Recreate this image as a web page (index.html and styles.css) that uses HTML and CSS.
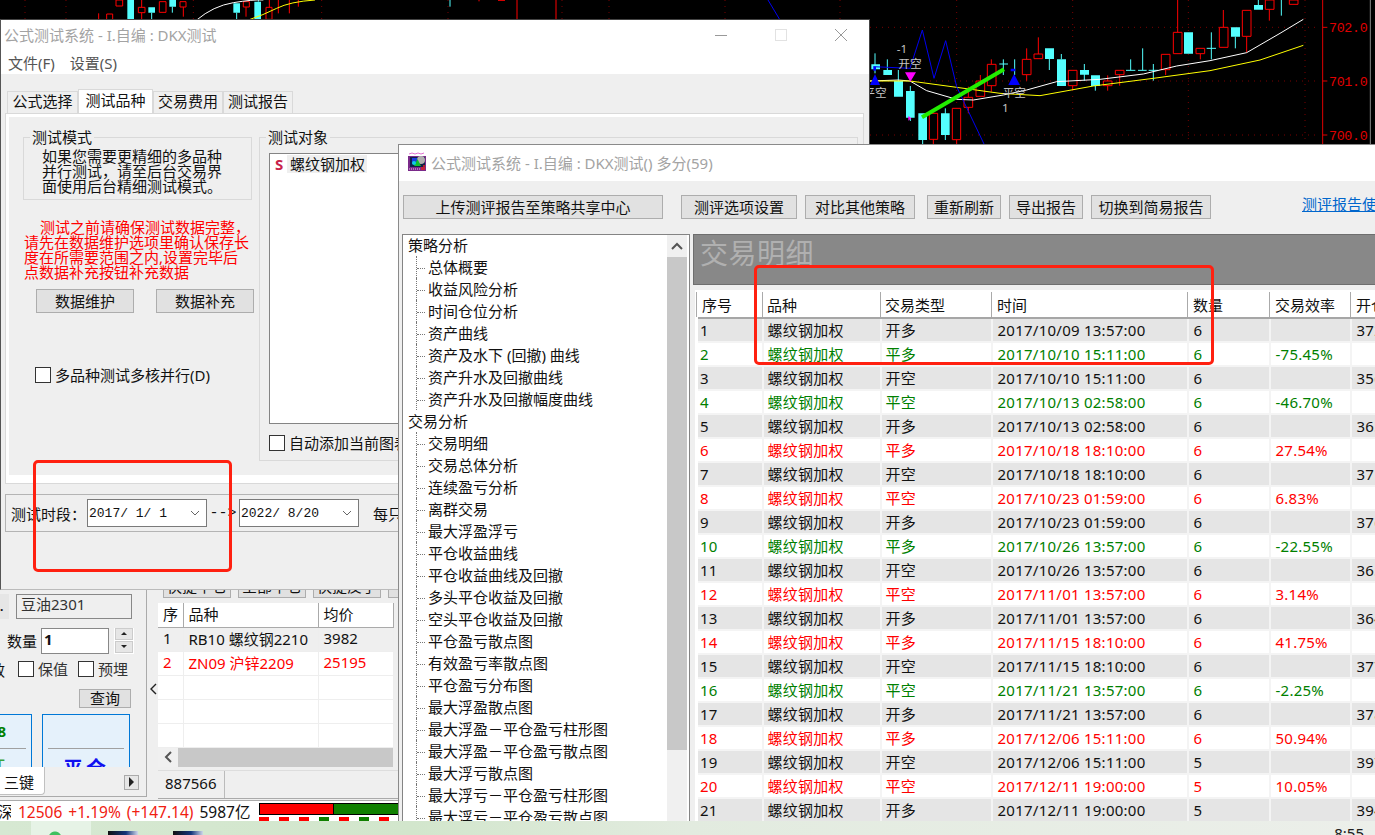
FILE: index.html
```html
<!DOCTYPE html>
<html lang="zh-CN">
<head>
    <meta charset="UTF-8">
    <meta name="viewport" content="width=device-width, initial-scale=1.0">
    <title>公式测试系统</title>
    <link rel="stylesheet" href="styles.css">
</head>
<body>
<div class="desktop">

    <!-- 背景K线图 -->
    <svg class="chart chart-top" viewBox="0 0 2610 60" aria-hidden="true">
        <path class="grid" d="M75 0V60M198 0V60M580 0V60M965 0V60M1344 0V60M1686 0V60M1827 0V60M2175 0V60M2520 0V60"/>
        <path class="wick-r" d="M296 40V60M425 0V58M550 20V50M738 20V50M808 0V58M835 0V40M868 0V40M895 0V20M1551 0V60M1668 0V60M1494 1H1515M1437 0V4"/>
        <path class="wick-c" d="M455 38V58M517 20V38M710 38V58M775 0V5M1350 0V20"/>
        <path class="cn-r" d="M348 0H368V18H348ZM320 42H338V60H320ZM415 22H435V38H415ZM478 5H498V37H478ZM540 5H558V21H540ZM730 5H748V21H730ZM798 22H816V58H798Z"/>
        <path class="cn-c" d="M382 0H402V58H382ZM445 22H465V38H445ZM508 0H528V20H508ZM700 10H720V38H700ZM763 5H783V60H763Z"/>
        <path class="ma-w" d="M590 60Q640 18 700 8T790 0"/>
        <path class="ma-y" d="M745 60Q790 45 830 25T945 0"/>
        <path class="wick-b" d="M2304 0L2340 60"/>
    </svg>

    <svg class="chart chart-side" viewBox="0 0 1545 432" aria-hidden="true">
        <path class="grid" d="M30 82H1380M30 243H1380M30 405H1380M290 0V432M638 0V432M985 0V432M1335 0V432"/>
        <path class="wick-c" d="M45 160V220M82 178V210M115 210V243M151 258V363M188 420V432M256 325V420M568 177V210M604 162V178M673 192V242M706 258V272M1126 110V145M1195 0V15M1264 0V47M430 178V225M418 192H444M464 178V225M812 178V211M798 211H826M848 145V211M834 211H860M880 192V242M866 211H894M1054 97V178M1040 145H1068"/>
        <path class="wick-r" d="M220 418V432M290 419V432M325 260V292M325 322V340M361 225V243M394 178V193M394 257V275M500 145V178M500 224V242M535 112V162M638 257V270M743 226V243M743 257V272M779 224V257M917 209V225M953 0V97M1021 161V178M1090 30V82M1160 109V158M1228 28V62"/>
        <path class="cn-c" d="M34 193H60V208H34ZM70 210H96V225H70ZM102 243H129V290H102ZM138 273H164V353H138ZM175 340H201V420H175ZM243 340H269V405H243ZM555 145H582V177H555ZM591 178H618V258H591ZM660 210H687V224H660ZM693 226H720V258H693ZM972 97H999V161H972ZM1113 82H1140V110H1113ZM1182 15H1209V29H1182Z"/>
        <path class="cn-r" d="M208 340H233V418H208ZM277 325H302V419H277ZM312 292H338V322H312ZM348 243H374V289H348ZM382 193H408V257H382ZM487 178H513V224H487ZM522 162H548V176H522ZM625 211H651V257H625ZM730 243H756V257H730ZM766 211H792V224H766ZM904 163H930V209H904ZM940 97H966V161H940ZM1008 145H1034V161H1008ZM1078 82H1104V142H1078ZM1147 31H1173V109H1147ZM1216 0H1242V28H1216ZM1288 0H1314V13H1288Z"/>
        <polyline class="ma-w" points="30,243 115,240 150,243 200,272 290,298 340,300 430,285 500,270 590,245 720,238 850,222 950,198 1050,182 1160,158 1260,100 1330,58"/>
        <polyline class="ma-y" points="30,243 150,243 290,262 420,280 540,287 700,258 880,235 1050,212 1200,180 1330,136"/>
        <polyline class="wick-b" points="40,200 150,205 187,90 222,235 257,122 290,260 372,432"/>
        <path class="mark-line" d="M186 352L432 208"/>
        <path class="mark-b" d="M45 222L60 255H30ZM462 222L480 255H445ZM40 200H48V212H40ZM452 206H466V214H452Z"/>
        <path class="mark-m" d="M135 217H168L151 245ZM145 348L154 355L145 362Z"/>
        <text class="chart-label" x="110" y="158">-1</text>
        <text class="chart-label" x="115" y="203">开空</text>
        <text class="chart-label" x="10" y="290">平空</text>
        <text class="chart-label" x="428" y="290">平空</text>
        <text class="chart-label" x="426" y="335">1</text>
        <path class="axis" d="M1388 0V432M1388 82H1402M1388 243H1402M1388 405H1402"/>
        <text class="axis-label" x="1407" y="97">702.0</text>
        <text class="axis-label" x="1407" y="259">701.0</text>
        <text class="axis-label" x="1407" y="421">700.0</text>
        <path class="edge" d="M1531 0V432"/>
    </svg>

    <!-- 后面的交易面板 -->
    <div class="trade-app">
        <div class="trade-main">
            <div class="order-panel">
                <div class="order-name-row">
                    <button class="stub-btn">.</button>
                    <div class="name-box">豆油2301</div>
                </div>
                <div class="qty-row">
                    <span>数量</span>
                    <div class="qty-input">1</div>
                    <div class="spinner">
                        <div class="spin-btn"><i class="tri-up"></i></div>
                        <div class="spin-btn"><i class="tri-down"></i></div>
                    </div>
                </div>
                <div class="option-row">
                    <span class="cut-label">效</span>
                    <span class="check"></span><span class="option-text">保值</span>
                    <span class="check check-next"></span><span class="option-text">预埋</span>
                </div>
                <button class="win-btn query-btn">查询</button>
                <div class="card-row">
                    <div class="trade-card card-left">
                        <div class="card-top card-green">8</div>
                        <div class="card-action card-green">开</div>
                    </div>
                    <div class="trade-card card-right">
                        <div class="card-top"></div>
                        <div class="card-action">平仓</div>
                    </div>
                </div>
                <div class="key-tabs">
                    <div class="key-tab">三键</div>
                    <div class="key-next"><i class="tri-right"></i></div>
                </div>
            </div>
            <div class="collapse-strip">
                <svg width="8" height="12" viewBox="0 0 8 12"><path d="M7 1L2 6L7 11" fill="none" stroke="#222" stroke-width="1.4"/></svg>
            </div>
            <div class="position-panel">
                <div class="quick-btns">
                    <button class="win-btn quick-btn">快捷平仓</button>
                    <button class="win-btn quick-btn">全部平仓</button>
                    <button class="win-btn quick-btn">快捷反手</button>
                    <button class="win-btn quick-btn">撤单</button>
                </div>
                <table class="pos-table">
                    <colgroup><col class="pc-1"><col class="pc-2"><col class="pc-3"></colgroup>
                    <thead><tr><th>序</th><th>品种</th><th>均价</th></tr></thead>
                    <tbody>
                        <tr class="pos-odd"><td>1</td><td>RB10 螺纹钢2210</td><td>3982</td></tr>
                        <tr class="up"><td>2</td><td>ZN09 沪锌2209</td><td>25195</td></tr>
                        <tr><td></td><td></td><td></td></tr>
                        <tr><td></td><td></td><td></td></tr>
                        <tr><td></td><td></td><td></td></tr>
                    </tbody>
                </table>
                <div class="h-scroll">
                    <div class="h-scroll-arrow">
                        <svg width="8" height="12" viewBox="0 0 8 12"><path d="M7 1L2 6L7 11" fill="none" stroke="#555" stroke-width="2"/></svg>
                    </div>
                    <div class="h-scroll-thumb"></div>
                </div>
                <div class="account-row"><div class="account-cell">887566</div></div>
            </div>
        </div>
        <div class="status-bar">
            <span class="st-name">深</span>
            <span class="st-up">12506</span>
            <span class="st-up">+1.19%</span>
            <span class="st-up">(+147.14)</span>
            <span>5987亿</span>
            <div class="st-meter">
                <div class="st-bar"><div class="st-bar-red"></div><div class="st-bar-green"></div></div>
                <div class="st-ticks"><i></i><i></i><i></i><i class="tick-green"></i><i></i><i class="tick-green"></i><i></i></div>
            </div>
        </div>
    </div>

    <!-- 公式测试系统 窗口1 -->
    <div class="window win-setup">
        <div class="titlebar">
            <span class="title-text">公式测试系统 - I.自编 : DKX测试</span>
            <div class="win-controls">
                <svg width="14" height="14" viewBox="0 0 14 14"><path d="M1 7.5H13" stroke="#999"/></svg>
                <svg width="14" height="14" viewBox="0 0 14 14"><rect x="1.5" y="1.5" width="11" height="11" fill="none" stroke="#e2e2e2"/></svg>
                <svg width="14" height="14" viewBox="0 0 14 14"><path d="M1 1L13 13M13 1L1 13" stroke="#999"/></svg>
            </div>
        </div>
        <div class="menubar"><span>文件(F)</span><span>设置(S)</span></div>
        <div class="setup-body">
            <div class="tabs">
                <div class="tab">公式选择</div>
                <div class="tab tab-active">测试品种</div>
                <div class="tab">交易费用</div>
                <div class="tab">测试报告</div>
            </div>
            <div class="tab-panel">
                <div class="tab-inner">
                    <div class="left-col">
                        <div class="group mode-group">
                            <div class="group-title">测试模式</div>
                            <div class="mode-text">如果您需要更精细的多品种<br>并行测试，请至后台交易界<br>面使用后台精细测试模式。</div>
                        </div>
                        <div class="warn-text"><span class="warn-first">测试之前请确保测试数据完整，</span><br>请先在数据维护选项里确认保存长<br>度在所需要范围之内,设置完毕后<br>点数据补充按钮补充数据</div>
                        <div class="data-btns">
                            <button class="win-btn data-btn">数据维护</button>
                            <button class="win-btn data-btn">数据补充</button>
                        </div>
                        <label class="check-row multi-core"><span class="check"></span>多品种测试多核并行(D)</label>
                    </div>
                    <div class="group target-group">
                        <div class="group-title">测试对象</div>
                        <div class="target-list">
                            <div class="target-item"><span class="target-s">S</span><span class="target-name">螺纹钢加权</span></div>
                        </div>
                        <label class="check-row auto-add"><span class="check"></span>自动添加当前图表品种</label>
                    </div>
                </div>
            </div>
            <div class="period-group">
                <span>测试时段：</span>
                <div class="date-box">2017/ 1/ 1<svg width="10" height="6" viewBox="0 0 10 6"><path d="M1 1L5 5L9 1" fill="none" stroke="#666"/></svg></div>
                <span class="date-sep">--&gt;</span>
                <div class="date-box">2022/ 8/20<svg width="10" height="6" viewBox="0 0 10 6"><path d="M1 1L5 5L9 1" fill="none" stroke="#666"/></svg></div>
                <span class="per-each">每只品种</span>
            </div>
        </div>
    </div>

    <!-- 公式测试系统 窗口2 -->
    <div class="window win-report">
        <div class="titlebar report-title">
            <svg class="app-icon" width="20" height="20" viewBox="0 0 20 20">
                <rect x="1" y="4" width="18" height="15" fill="#7a2a8a"/>
                <rect x="3" y="5" width="15" height="10" fill="#10204a"/>
                <path d="M2 2L5 1L8 2L11 1L14 2L17 1" fill="none" stroke="#e070d0"/>
                <path d="M2 17H14" stroke="#f0c0f0" stroke-dasharray="1 1"/>
                <rect x="5" y="6" width="5" height="6" fill="#1a3ee0"/>
                <circle cx="14" cy="8" r="4" fill="#b0b0b0"/>
                <path d="M7 14L10.500 7L14 14Z" fill="#10c030"/>
                <circle cx="7" cy="11" r="2" fill="#10d0e0"/>
                <path d="M15 18V15M17 18V13" stroke="#e02020" stroke-width="1.500"/>
            </svg>
            <span class="title-text">公式测试系统 - I.自编 : DKX测试() 多分(59)</span>
        </div>
        <div class="report-toolbar">
            <button class="win-btn tb-upload">上传测评报告至策略共享中心</button>
            <button class="win-btn tb-option">测评选项设置</button>
            <button class="win-btn tb-compare">对比其他策略</button>
            <button class="win-btn tb-refresh">重新刷新</button>
            <button class="win-btn tb-export">导出报告</button>
            <button class="win-btn tb-switch">切换到简易报告</button>
            <a class="help-link">测评报告使用说明</a>
        </div>
        <div class="report-main">
            <div class="tree-box">
                <div class="tree-list">
                    <div class="tree-root">策略分析</div>
                    <div class="tree-leaf">总体概要</div>
                    <div class="tree-leaf">收益风险分析</div>
                    <div class="tree-leaf">时间仓位分析</div>
                    <div class="tree-leaf">资产曲线</div>
                    <div class="tree-leaf">资产及水下 (回撤) 曲线</div>
                    <div class="tree-leaf">资产升水及回撤曲线</div>
                    <div class="tree-leaf">资产升水及回撤幅度曲线</div>
                    <div class="tree-root">交易分析</div>
                    <div class="tree-leaf">交易明细</div>
                    <div class="tree-leaf">交易总体分析</div>
                    <div class="tree-leaf">连续盈亏分析</div>
                    <div class="tree-leaf">离群交易</div>
                    <div class="tree-leaf">最大浮盈浮亏</div>
                    <div class="tree-leaf">平仓收益曲线</div>
                    <div class="tree-leaf">平仓收益曲线及回撤</div>
                    <div class="tree-leaf">多头平仓收益及回撤</div>
                    <div class="tree-leaf">空头平仓收益及回撤</div>
                    <div class="tree-leaf">平仓盈亏散点图</div>
                    <div class="tree-leaf">有效盈亏率散点图</div>
                    <div class="tree-leaf">平仓盈亏分布图</div>
                    <div class="tree-leaf">最大浮盈散点图</div>
                    <div class="tree-leaf">最大浮盈－平仓盈亏柱形图</div>
                    <div class="tree-leaf">最大浮盈－平仓盈亏散点图</div>
                    <div class="tree-leaf">最大浮亏散点图</div>
                    <div class="tree-leaf">最大浮亏－平仓盈亏柱形图</div>
                    <div class="tree-leaf">最大浮亏－平仓盈亏散点图</div>
                </div>
                <div class="v-scroll">
                    <div class="v-scroll-arrow">
                        <svg width="12" height="8" viewBox="0 0 12 8"><path d="M1 7L6 2L11 7" fill="none" stroke="#555" stroke-width="2"/></svg>
                    </div>
                    <div class="v-scroll-thumb"></div>
                </div>
            </div>
            <div class="detail-area">
                <div class="detail-head">交易明细</div>
                <table class="trade-table">
                    <colgroup>
                        <col class="tc-no"><col class="tc-name"><col class="tc-type"><col class="tc-time"><col class="tc-qty"><col class="tc-eff"><col class="tc-open">
                    </colgroup>
                    <thead>
                        <tr><th>序号</th><th>品种</th><th>交易类型</th><th>时间</th><th>数量</th><th>交易效率</th><th>开仓价</th></tr>
                    </thead>
                    <tbody>
                        <tr><td>1</td><td>螺纹钢加权</td><td>开多</td><td>2017/10/09 13:57:00</td><td>6</td><td></td><td>3725</td></tr>
                        <tr class="loss"><td>2</td><td>螺纹钢加权</td><td>平多</td><td>2017/10/10 15:11:00</td><td>6</td><td>-75.45%</td><td></td></tr>
                        <tr><td>3</td><td>螺纹钢加权</td><td>开空</td><td>2017/10/10 15:11:00</td><td>6</td><td></td><td>3560</td></tr>
                        <tr class="loss"><td>4</td><td>螺纹钢加权</td><td>平空</td><td>2017/10/13 02:58:00</td><td>6</td><td>-46.70%</td><td></td></tr>
                        <tr><td>5</td><td>螺纹钢加权</td><td>开多</td><td>2017/10/13 02:58:00</td><td>6</td><td></td><td>3650</td></tr>
                        <tr class="gain"><td>6</td><td>螺纹钢加权</td><td>平多</td><td>2017/10/18 18:10:00</td><td>6</td><td>27.54%</td><td></td></tr>
                        <tr><td>7</td><td>螺纹钢加权</td><td>开空</td><td>2017/10/18 18:10:00</td><td>6</td><td></td><td>3710</td></tr>
                        <tr class="gain"><td>8</td><td>螺纹钢加权</td><td>平空</td><td>2017/10/23 01:59:00</td><td>6</td><td>6.83%</td><td></td></tr>
                        <tr><td>9</td><td>螺纹钢加权</td><td>开多</td><td>2017/10/23 01:59:00</td><td>6</td><td></td><td>3760</td></tr>
                        <tr class="loss"><td>10</td><td>螺纹钢加权</td><td>平多</td><td>2017/10/26 13:57:00</td><td>6</td><td>-22.55%</td><td></td></tr>
                        <tr><td>11</td><td>螺纹钢加权</td><td>开空</td><td>2017/10/26 13:57:00</td><td>6</td><td></td><td>3650</td></tr>
                        <tr class="gain"><td>12</td><td>螺纹钢加权</td><td>平空</td><td>2017/11/01 13:57:00</td><td>6</td><td>3.14%</td><td></td></tr>
                        <tr><td>13</td><td>螺纹钢加权</td><td>开多</td><td>2017/11/01 13:57:00</td><td>6</td><td></td><td>3640</td></tr>
                        <tr class="gain"><td>14</td><td>螺纹钢加权</td><td>平多</td><td>2017/11/15 18:10:00</td><td>6</td><td>41.75%</td><td></td></tr>
                        <tr><td>15</td><td>螺纹钢加权</td><td>开空</td><td>2017/11/15 18:10:00</td><td>6</td><td></td><td>3770</td></tr>
                        <tr class="loss"><td>16</td><td>螺纹钢加权</td><td>平空</td><td>2017/11/21 13:57:00</td><td>6</td><td>-2.25%</td><td></td></tr>
                        <tr><td>17</td><td>螺纹钢加权</td><td>开多</td><td>2017/11/21 13:57:00</td><td>6</td><td></td><td>3780</td></tr>
                        <tr class="gain"><td>18</td><td>螺纹钢加权</td><td>平多</td><td>2017/12/06 15:11:00</td><td>6</td><td>50.94%</td><td></td></tr>
                        <tr><td>19</td><td>螺纹钢加权</td><td>开空</td><td>2017/12/06 15:11:00</td><td>5</td><td></td><td>3970</td></tr>
                        <tr class="gain"><td>20</td><td>螺纹钢加权</td><td>平空</td><td>2017/12/11 19:00:00</td><td>5</td><td>10.05%</td><td></td></tr>
                        <tr><td>21</td><td>螺纹钢加权</td><td>开多</td><td>2017/12/11 19:00:00</td><td>5</td><td></td><td>3940</td></tr>
                    </tbody>
                </table>
            </div>
        </div>
    </div>

    <!-- 截图上的红框 -->
    <div class="red-box red-box-date"></div>
    <div class="red-box red-box-table"></div>

    <!-- 任务栏 -->
    <div class="taskbar">
        <div class="task-slot task-slot-a"></div>
        <div class="task-icon task-icon-a"></div>
        <div class="task-icon task-icon-b"></div>
        <span class="task-clock">8:55</span>
    </div>
</div>
</body>
</html>
```

FILE: styles.css
```css
* {
    box-sizing: border-box;
}
html, body {
    margin: 0;
    height: 100%;
    overflow: hidden;
}
body {
    font-family: "Noto Sans", "Noto Sans CJK SC", sans-serif;
    font-size: 15px;
    color: #111;
    background: #000;
}
button {
    font: inherit;
    color: inherit;
    padding: 0;
}
.desktop {
    position: relative;
    width: 1375px;
    height: 835px;
    overflow: hidden;
    background: #000;
}

/* K线图 */
.chart {
    position: absolute;
    display: block;
}
.chart-top {
    left: 0;
    top: 0;
    width: 870px;
    height: 20px;
}
.chart-side {
    left: 860px;
    top: 0;
    width: 515px;
    height: 144px;
}
.grid {
    fill: none;
    stroke: #7a0000;
    stroke-width: 3;
    stroke-dasharray: 3 15;
}
.wick-r { fill: none; stroke: #f00; stroke-width: 3; }
.wick-c { fill: none; stroke: #54ffff; stroke-width: 3; }
.wick-b { fill: none; stroke: #0000f0; stroke-width: 3; }
.cn-r { fill: #000; stroke: #f00; stroke-width: 3; }
.cn-c { fill: #54ffff; }
.ma-w { fill: none; stroke: #fff; stroke-width: 3; }
.ma-y { fill: none; stroke: #ff0; stroke-width: 3; }
.mark-line { fill: none; stroke: #22ee00; stroke-width: 12; }
.mark-b { fill: #0000ff; }
.mark-m { fill: #ff00ff; }
.chart-label {
    fill: #c4c4c4;
    font-size: 35px;
}
.axis { fill: none; stroke: #e00000; stroke-width: 3; }
.axis-label {
    fill: #e00000;
    font-family: "Liberation Mono", monospace;
    font-size: 40px;
    letter-spacing: -1px;
}
.edge { fill: none; stroke: #888; stroke-width: 3; }

/* 窗口 */
.window {
    position: absolute;
    display: flex;
    flex-direction: column;
    background: #efefef;
    overflow: hidden;
}
.titlebar {
    display: flex;
    align-items: center;
    background: #fff;
    flex: none;
}
.title-text {
    color: #a3a3a3;
    white-space: nowrap;
}
.win-setup {
    left: 0;
    top: 19px;
    width: 870px;
    height: 571px;
    border-top: 1px solid #444;
    border-left: 1px solid #555;
    border-right: 1px solid #444;
    border-bottom: 1px solid #bbb;
}
.win-setup .titlebar {
    height: 30px;
    padding: 0 0 2px 3px;
    justify-content: space-between;
}
.win-controls {
    display: flex;
    gap: 46px;
    padding: 2px 21px 0 0;
}
.menubar {
    display: flex;
    gap: 15px;
    height: 24px;
    padding: 1px 0 0 7px;
    align-items: center;
    background: #fff;
    color: #555;
    flex: none;
}
.setup-body {
    flex: 1;
    padding: 15px 5px 0 4px;
}
.tabs {
    display: flex;
    height: 24px;
    align-items: flex-end;
    padding-left: 2px;
}
.tab {
    height: 22px;
    border: 1px solid #d9d9d9;
    border-bottom: 0;
    width: 70px;
    line-height: 19px;
    text-align: center;
    white-space: nowrap;
}
.tab:first-child {
    width: 71px;
}
.tab-active {
    height: 24px;
    width: 75px;
    background: #fff;
    line-height: 21px;
}
.tab-panel {
    height: 371px;
    border: 1px solid #d9d9d9;
    background: #fff;
    padding: 3px 0 8px 3px;
}
.tab-inner {
    display: flex;
    gap: 7px;
    height: 100%;
    background: #efefef;
    padding: 20px 5px 0 14px;
}
.left-col {
    width: 229px;
    flex: none;
}
.group {
    border: 1px solid #d9d9d9;
}
.group-title {
    display: table;
    margin: -11px 0 0 6px;
    padding: 0 2px;
    background: #efefef;
    line-height: 20px;
}
.mode-group {
    height: 63px;
}
.mode-text {
    padding: 2px 0 0 18px;
    line-height: 15px;
    white-space: nowrap;
}
.warn-text {
    margin: 20px 0 0 1px;
    line-height: 15px;
    color: #f00;
    white-space: nowrap;
}
.warn-first {
    padding-left: 16px;
}
.data-btns {
    display: flex;
    gap: 22px;
    margin: 9px 0 0 13px;
}
.win-btn {
    display: block;
    flex: none;
    height: 24px;
    padding-bottom: 2px;
    background: #e1e1e1;
    border: 1px solid #adadad;
    white-space: nowrap;
    text-align: center;
}
.data-btn {
    width: 98px;
}
.check {
    display: block;
    flex: none;
    width: 16px;
    height: 16px;
    background: #fff;
    border: 1px solid #333;
}
.check-row {
    display: flex;
    align-items: center;
    gap: 4px;
    white-space: nowrap;
}
.multi-core {
    margin: 51px 0 0 12px;
}
.target-group {
    flex: 1;
    height: 324px;
}
.target-list {
    height: 271px;
    margin: 6px 0 0 9px;
    background: #fff;
    border: 1px solid #848484;
}
.target-item {
    display: flex;
    align-items: center;
    height: 18px;
    margin-top: 1px;
    padding-left: 5px;
}
.target-s {
    width: 12px;
    color: #c8224a;
    font-weight: 700;
}
.target-name {
    background: #efefef;
    padding: 0 2px 0 3px;
    line-height: 18px;
}
.auto-add {
    margin: 8px 0 0 9px;
}
.period-group {
    display: flex;
    align-items: center;
    height: 38px;
    margin-top: 10px;
    padding-left: 5px;
    border: 1px solid #b4b4b4;
    white-space: nowrap;
}
.date-box {
    display: flex;
    align-items: center;
    justify-content: space-between;
    width: 120px;
    height: 28px;
    padding: 0 6px 0 1px;
    background: #fff;
    border: 1px solid #7a7a7a;
    font-family: "Liberation Mono", monospace;
    font-size: 13px;
    white-space: pre;
}
.date-box:first-of-type {
    margin-left: 1px;
}
.date-sep {
    width: 32px;
    text-align: center;
    font-family: "Liberation Mono", monospace;
}
.per-each {
    margin-left: 14px;
}

/* 报告窗口 */
.win-report {
    left: 398px;
    top: 144px;
    width: 977px;
    height: 678px;
    border-top: 1px solid #8a8a8a;
    border-left: 1px solid #8a8a8a;
}
.report-title {
    height: 36px;
    padding: 0 0 2px 8px;
    gap: 4px;
}
.report-toolbar {
    display: flex;
    flex: none;
    padding: 14px 0 0 4px;
    height: 53px;
    white-space: nowrap;
}
.tb-upload { width: 260px; }
.tb-option { width: 116px; margin-left: 18px; }
.tb-compare { width: 110px; margin-left: 8px; }
.tb-refresh { width: 74px; margin-left: 12px; }
.tb-export { width: 74px; margin-left: 8px; }
.tb-switch { width: 120px; margin-left: 8px; }
.help-link {
    flex: none;
    margin: -2px 0 0 91px;
    height: 20px;
    color: #0066cc;
    text-decoration: underline;
}
.report-main {
    flex: 1;
    display: flex;
    min-height: 0;
    padding-left: 3px;
}
.tree-box {
    display: flex;
    width: 288px;
    flex: none;
    background: #fff;
    border: 1px solid #848484;
    border-bottom: 0;
}
.tree-list {
    flex: 1;
    min-width: 0;
    margin-top: -1px;
    overflow: hidden;
}
.tree-root,
.tree-leaf {
    height: 22px;
    line-height: 22px;
    white-space: nowrap;
}
.tree-root {
    padding-left: 5px;
}
.tree-leaf {
    position: relative;
    padding-left: 25px;
}
.tree-leaf::before {
    content: "";
    position: absolute;
    left: 13px;
    top: 0;
    bottom: 0;
    border-left: 1px dotted #777;
}
.tree-leaf::after {
    content: "";
    position: absolute;
    left: 14px;
    top: 12px;
    width: 8px;
    border-top: 1px dotted #777;
}
.v-scroll {
    width: 20px;
    flex: none;
    margin-right: 2px;
    background: #f0f0f0;
}
.v-scroll-arrow {
    display: flex;
    align-items: center;
    justify-content: center;
    height: 22px;
}
.v-scroll-thumb {
    height: 493px;
    background: #c8c8c8;
}
.detail-area {
    flex: 1;
    min-width: 0;
    padding-left: 3px;
    overflow: hidden;
}
.detail-head {
    height: 51px;
    padding-left: 6px;
    background: #888;
    border: 1px solid #6e6e6e;
    border-right: 0;
    color: #b0b0b0;
    font-size: 28px;
    line-height: 34px;
    letter-spacing: .5px;
    font-family: "Noto Sans CJK SC", sans-serif;
}
.trade-table {
    width: 695px;
    margin: 5px 0 0 2px;
    border-collapse: collapse;
    table-layout: fixed;
    background: #fff;
    border-top: 1px solid #aaa;
    border-left: 1px solid #aaa;
}
.tc-no { width: 66px; }
.tc-name { width: 118px; }
.tc-type { width: 111px; }
.tc-time { width: 196px; }
.tc-qty { width: 82px; }
.tc-eff { width: 81px; }
.tc-open { width: 41px; }
.trade-table th {
    height: 27px;
    padding: 0 0 0 5px;
    font-weight: 400;
    text-align: left;
    white-space: nowrap;
    overflow: hidden;
    border-right: 1px solid #aaa;
    border-bottom: 2px solid #a6a6a6;
    border-top: 2px solid #fff;
}
.trade-table td {
    height: 24px;
    padding: 0 0 0 5px;
    white-space: nowrap;
    overflow: hidden;
    border-right: 2px solid #f4f4f4;
    border-bottom: 2px solid #f4f4f4;
    line-height: 20px;
    letter-spacing: .25px;
}
.trade-table th:nth-child(2),
.trade-table th:nth-child(3),
.trade-table td:nth-child(2),
.trade-table td:nth-child(3) {
    padding-left: 4px;
}
.trade-table td:first-child {
    border-left: 3px solid #fff;
    padding-left: 2px;
}
.trade-table tbody tr:nth-child(odd) td {
    background: #e5e5e5;
}
.loss td { color: #008000; }
.gain td { color: #f00; }

/* 红框 */
.red-box {
    position: absolute;
    border: 3px solid #ff2010;
    border-radius: 5px;
}
.red-box-date {
    left: 33px;
    top: 460px;
    width: 199px;
    height: 112px;
}
.red-box-table {
    left: 754px;
    top: 265px;
    width: 460px;
    height: 100px;
}

/* 交易面板 */
.trade-app {
    position: absolute;
    left: 0;
    top: 590px;
    width: 400px;
    height: 232px;
    background: #efefef;
    overflow: hidden;
}
.trade-main {
    display: flex;
    height: 210px;
}
.order-panel {
    width: 147px;
    height: 207px;
    flex: none;
    border-right: 1px solid #aaa;
    border-bottom: 1px solid #aaa;
    overflow: hidden;
}
.order-name-row {
    display: flex;
    margin-top: 4px;
}
.stub-btn {
    width: 9px;
    height: 25px;
    margin-right: 7px;
    background: #e6e6e6;
    border: 0;
    font-size: 12px;
    font-weight: 700;
    text-align: left;
}
.name-box {
    width: 116px;
    height: 25px;
    border: 1px solid #888;
    padding-left: 4px;
    line-height: 19px;
    color: #333;
}
.qty-row {
    display: flex;
    align-items: center;
    height: 26px;
    margin-top: 9px;
    padding: 0 0 1px 7px;
    white-space: nowrap;
}
.qty-input {
    width: 68px;
    height: 26px;
    margin-left: 4px;
    padding-left: 2px;
    background: #fff;
    border: 1px solid #888;
    font-weight: 700;
    line-height: 21px;
}
.spinner {
    width: 20px;
    margin-left: 5px;
    background: #fff;
}
.spin-btn {
    display: flex;
    align-items: center;
    justify-content: center;
    height: 12px;
    margin: 0 1px 1px;
    background: #e6e6e6;
    border: 1px solid #ccc;
}
.tri-up, .tri-down, .tri-right {
    display: block;
    width: 0;
    height: 0;
    border: 3px solid transparent;
}
.tri-up { border-bottom-color: #222; border-top: 0; }
.tri-down { border-top-color: #222; border-bottom: 0; }
.tri-right { border-left: 5px solid #222; border-right: 0; border-top-width: 5px; border-bottom-width: 5px; }
.option-row {
    display: flex;
    align-items: center;
    height: 16px;
    margin-top: 7px;
    white-space: nowrap;
}
.cut-label {
    width: 18px;
    margin-left: -10px;
    flex: none;
    overflow: hidden;
    margin-right: 10px;
}
.option-text {
    margin: -2px 0 0 4px;
    color: #333;
}
.check-next {
    margin-left: 10px;
}
.query-btn {
    width: 52px;
    height: 19px;
    margin: 12px 0 0 79px;
    padding-bottom: 0;
    line-height: 15px;
}
.card-row {
    display: flex;
    gap: 10px;
    height: 53px;
    margin: 6px 0 0 -50px;
    overflow: hidden;
}
.trade-card {
    height: 80px;
    background: #e5f1fb;
    border: 1px solid #0078d7;
    padding: 0 5px;
    text-align: center;
}
.card-left { width: 82px; text-align: right; }
.card-right { width: 88px; }
.card-top {
    height: 34px;
    border-bottom: 1px solid #a0a0a0;
    line-height: 32px;
    font-weight: 700;
}
.card-green {
    color: #008000;
    padding-right: 17px;
}
.card-action {
    color: #1010f0;
    font-size: 20px;
    font-weight: 700;
    line-height: 40px;
    letter-spacing: 3px;
}
.card-left .card-top {
    padding-right: 20px;
}
.card-left .card-action {
    color: #3aa53a;
    font-weight: 400;
}
.key-tabs {
    display: flex;
    align-items: center;
    justify-content: space-between;
    height: 30px;
    padding-right: 7px;
}
.key-tab {
    align-self: flex-start;
    width: 45px;
    height: 28px;
    padding-left: 4px;
    background: #fff;
    border: 1px solid #c0c0c0;
    border-top: 0;
    border-left: 0;
    border-radius: 0 0 4px 0;
    line-height: 31px;
}
.key-next {
    display: flex;
    align-items: center;
    justify-content: center;
    width: 15px;
    height: 15px;
    background: #e6e6e6;
    border: 1px solid #aaa;
}
.collapse-strip {
    display: flex;
    align-items: center;
    justify-content: center;
    width: 11px;
    height: 198px;
    flex: none;
}
.position-panel {
    width: 242px;
    flex: none;
}
.quick-btns {
    display: flex;
    align-items: flex-end;
    gap: 7px;
    height: 8px;
    padding-left: 5px;
    overflow: hidden;
}
.quick-btn {
    width: 68px;
}
.pos-table {
    width: 235px;
    margin-top: 5px;
    background: #fff;
    border-collapse: collapse;
    table-layout: fixed;
}
.pc-1 { width: 25px; }
.pc-2 { width: 135px; }
.pc-3 { width: 75px; }
.pos-table th {
    height: 24px;
    padding: 0 0 2px 5px;
    font-weight: 400;
    text-align: left;
    border-right: 1px solid #aaa;
    border-bottom: 1px solid #aaa;
}
.pos-table td {
    height: 24px;
    padding: 0 0 2px 5px;
    white-space: nowrap;
    border-right: 1px solid #eee;
    border-bottom: 1px solid #eee;
}
.pos-odd td {
    background: #efefef;
}
.pos-table .up td {
    color: #f00;
}
.h-scroll {
    display: flex;
    width: 235px;
    height: 19px;
    background: #f0f0f0;
}
.h-scroll-arrow {
    display: flex;
    align-items: center;
    justify-content: center;
    width: 20px;
}
.h-scroll-thumb {
    flex: 1;
    background: #c8c8c8;
}
.account-row {
    height: 29px;
    margin-top: 3px;
    border-top: 1px solid #ddd;
    border-bottom: 1px solid #aaa;
}
.account-cell {
    width: 67px;
    height: 100%;
    padding-left: 7px;
    border-right: 1px solid #bbb;
    line-height: 24px;
}
.status-bar {
    display: flex;
    align-items: center;
    gap: 6px;
    height: 22px;
    background: #fff;
    border-top: 1px solid #aaa;
    font-size: 15.500px;
    white-space: nowrap;
}
.st-name {
    width: 13px;
    flex: none;
    margin-left: -2px;
    margin-right: 1px;
    overflow: hidden;
}
.st-up {
    color: #f02010;
}
.st-meter {
    flex: none;
    align-self: flex-start;
    width: 141px;
    margin-left: auto;
    padding-top: 2px;
}
.st-bar {
    display: flex;
    height: 12px;
    border: 1px solid #000;
    border-right: 0;
}
.st-bar-red {
    width: 74px;
    background: #f00;
    border-right: 1px solid #000;
}
.st-bar-green {
    flex: 1;
    background: #108000;
}
.st-ticks {
    display: flex;
    gap: 10px;
    margin-top: 2px;
}
.st-ticks i {
    display: block;
    width: 10px;
    height: 5px;
    background: #f00;
}
.st-ticks .tick-green {
    background: #108000;
}

/* 任务栏 */
.taskbar {
    position: absolute;
    left: 0;
    bottom: 0;
    width: 1375px;
    height: 14px;
    display: flex;
    background: linear-gradient(90deg, #d6e8d2 0, #d2e6cc 30%, #e2ebdf 50%, #ecefea 100%);
    overflow: hidden;
}
.task-slot-a {
    width: 60px;
    margin-left: 31px;
    background: radial-gradient(circle at 24px 17px, #40c060 6px, transparent 7px), #e6f3e6;
}
.task-icon {
    width: 30px;
    height: 4px;
    margin-top: 10px;
    background: linear-gradient(90deg, #111 0, #14357a 60%, #cfd8ea 100%);
}
.task-icon-a {
    margin-left: 17px;
}
.task-icon-b {
    margin-left: 35px;
}
.task-clock {
    margin-left: auto;
    margin-right: 11px;
    line-height: 24px;
    color: #222;
}
```
